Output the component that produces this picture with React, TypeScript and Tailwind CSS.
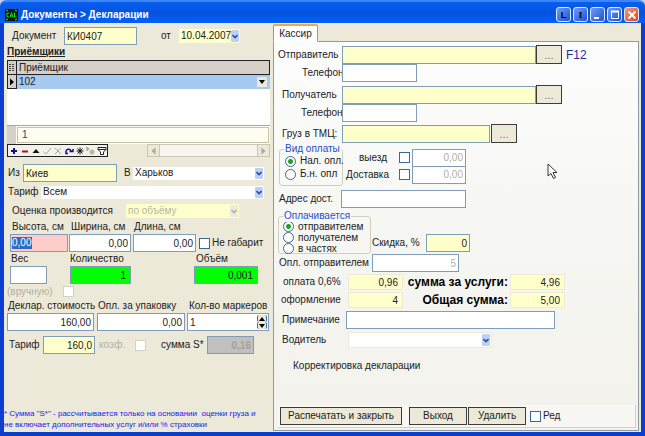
import React, { useState } from "react";

const box = "h-[18px] min-w-0 border border-[#7f9db9] px-1 text-[10px] leading-4 text-[#222] outline-none";

type BoxProps = {
  label: string;
  value?: string;
  className: string;
  disabled?: boolean;
};

function Box({ label, value = "", className, disabled }: BoxProps) {
  return <input type="text" aria-label={label} defaultValue={value} disabled={disabled} className={`${box} ${className}`} />;
}

type FieldProps = BoxProps & { id: string; labelClass?: string; inputClass: string };

function Field({ id, label, value = "", className, labelClass = "pl-[2px]", inputClass }: FieldProps) {
  return (
    <div className={`flex shrink-0 flex-col ${className}`}>
      <label htmlFor={id} className={`h-[14px] leading-[14px] whitespace-nowrap ${labelClass}`}>
        {label}
      </label>
      <input id={id} type="text" defaultValue={value} className={`${box} w-full ${inputClass}`} />
    </div>
  );
}

type PickProps = { id: string; label?: string; value: string; className: string; disabled?: boolean };

function Pick({ id, label, value, className, disabled }: PickProps) {
  return (
    <div className={`relative shrink-0 ${className}`}>
      <select
        id={id}
        aria-label={label}
        disabled={disabled}
        className="block h-full w-full appearance-none bg-transparent pr-[9px] pl-[2px] text-[10px] leading-none outline-none"
      >
        <option>{value}</option>
      </select>
      <span
        className={`pointer-events-none absolute top-px right-px bottom-px flex w-[8px] items-center justify-center rounded-[1px] ${
          disabled ? "bg-[#ebe9dc] text-[#b5b3a5]" : "bg-[#bdd0fb] text-[#33508f]"
        }`}
      >
        <svg width="6" height="5" viewBox="0 0 6 5" fill="none" stroke="currentColor" strokeWidth="1.6">
          <path d="M0.5 1 L3 3.5 L5.5 1" />
        </svg>
      </span>
    </div>
  );
}

function Tick({ id, label, muted }: { id: string; label?: string; muted?: boolean }) {
  return (
    <input
      id={id}
      aria-label={label}
      type="checkbox"
      disabled={muted}
      className={`size-[11px] shrink-0 appearance-none border bg-white checked:bg-[#21a121] ${
        muted ? "border-[#d5d2c2]" : "border-[#3a6a94]"
      }`}
    />
  );
}

function Radio({ name, label, defaultChecked }: { name: string; label: string; defaultChecked?: boolean }) {
  return (
    <label className="flex items-center gap-1 whitespace-nowrap">
      <input
        type="radio"
        name={name}
        defaultChecked={defaultChecked}
        className="size-[11px] shrink-0 appearance-none rounded-full border border-[#3a6a94] bg-white checked:bg-[radial-gradient(circle,#21a121_0_2px,#ffffff_3px)]"
      />
      {label}
    </label>
  );
}

function More({ label }: { label: string }) {
  return (
    <button
      type="button"
      aria-label={label}
      className="h-[19px] w-[26px] shrink-0 border border-[#3c3c38] bg-[#ece9d8] text-[11px] leading-4 text-[#77756a]"
    >
      ...
    </button>
  );
}

function TitleButton({ label, red, children }: { label: string; red?: boolean; children: React.ReactNode }) {
  return (
    <button
      type="button"
      aria-label={label}
      className={`flex size-[15px] items-center justify-center rounded-[3px] border border-[#dfe8fc] text-[9px] font-bold text-black ${
        red ? "bg-linear-to-br from-[#f09a7c] to-[#d8401c]" : "bg-linear-to-br from-[#6f9cf5] to-[#1c50d8]"
      }`}
    >
      {children}
    </button>
  );
}

function TitleBar() {
  return (
    <header className="flex h-[23px] items-center rounded-t-md border-t-2 border-[#3c86f8] bg-linear-to-b from-[#0a5fee] via-[#0453e0] to-[#0560f5] pr-[6px] pl-[5px]">
      <svg width="13" height="12" viewBox="0 0 13 12" className="mt-1">
        <rect width="13" height="12" fill="#061a06" />
        <path d="M1 2 L3 1 M10 1 L12 2 M1 10 L3 11 M10 11 L12 10" stroke="#b8b820" strokeWidth="1" />
        <path d="M4 4 H2 V8 H4 M5 8.500 L6.500 3.500 L8 8.500 M5.500 7 H7.500 M9.500 3.500 V8 H11.500" stroke="#19e019" strokeWidth="1" fill="none" />
      </svg>
      <h1 className="mt-1 ml-[3px] flex-1 text-[10px] leading-4 font-bold whitespace-nowrap text-white">Документы &gt; Декларации</h1>
      <div className="mt-1 flex gap-[2px]">
        <TitleButton label="L">L</TitleButton>
        <TitleButton label="I">
          <span className="font-['Liberation_Serif',serif]">I</span>
        </TitleButton>
        <TitleButton label="Свернуть">
          <svg width="10" height="10" viewBox="0 0 10 10">
            <rect x="1" y="7" width="5" height="2" fill="#fff" />
          </svg>
        </TitleButton>
        <TitleButton label="Развернуть">
          <svg width="10" height="10" viewBox="0 0 10 10" fill="none" stroke="#fff">
            <path d="M1 1.500 H9" strokeWidth="2" />
            <path d="M1.500 1 V8.500 H8.500 V1" />
          </svg>
        </TitleButton>
        <TitleButton label="Закрыть" red>
          <svg width="10" height="10" viewBox="0 0 10 10" stroke="#fff" strokeWidth="1.800">
            <path d="M1.500 1.500 L8.500 8.500 M8.500 1.500 L1.500 8.500" />
          </svg>
        </TitleButton>
      </div>
    </header>
  );
}

const tools: { label: string; icon: React.ReactNode }[] = [
  { label: "Добавить", icon: <path d="M5 2 V8 M2 5 H8" stroke="#10108c" strokeWidth="2" /> },
  { label: "Удалить строку", icon: <path d="M2 5.500 H8" stroke="#9c1c1c" strokeWidth="2" /> },
  { label: "Изменить", icon: <path d="M1.500 7 L5 3 L8.500 7 Z" fill="#111" /> },
  { label: "Сохранить", icon: <path d="M1.500 5.500 L4 8 L9 2" stroke="#a9a797" fill="none" /> },
  { label: "Отменить", icon: <path d="M2 2 L8 8 M8 2 L2 8" stroke="#a9a797" /> },
  { label: "Обновить", icon: <path d="M4 7.500 H2 C1 2 7 2 7.500 6 M5.500 5.500 H9 V3" stroke="#10108c" strokeWidth="1.500" fill="none" /> },
  { label: "Закладка", icon: <path d="M5 1.500 V8.500 M1.500 5 H8.500 M2.500 2.500 L7.500 7.500 M7.500 2.500 L2.500 7.500" stroke="#111" /> },
  {
    label: "К закладке",
    icon: <path d="M1 1 V5 L3 3 Z M6 3 V9 M3 6 H9 M4 4 L8 8 M8 4 L4 8" stroke="#a9a797" fill="#a9a797" />,
  },
  { label: "Фильтр", icon: <path d="M1 1.500 H9 V3.500 L6.500 6 V8.500 H3.500 V6 L1 3.500 Z M1 3.500 H9" stroke="#222" fill="#fff" /> },
];

function ReceiverGrid() {
  return (
    <section aria-label="Приёмщики">
      <table className="w-full table-fixed border-collapse bg-white text-left text-[10px]">
        <thead>
          <tr className="h-[14px] bg-[#d6d0c8]">
            <th className="w-[9px] border border-[#222] p-0">
              <svg width="7" height="9" viewBox="0 0 7 9" stroke="#444">
                <path d="M1 1.500 H3 M4 1.500 H6 M1 3.500 H3 M4 3.500 H6 M1 5.500 H3 M4 5.500 H6 M1 7.500 H3 M4 7.500 H6" />
              </svg>
            </th>
            <th className="border border-[#222] p-0 pl-[2px] leading-3 font-normal">Приёмщик</th>
          </tr>
        </thead>
        <tbody>
          <tr className="h-[14px]">
            <td className="border border-[#222] bg-[#d6d0c8] p-0">
              <svg width="7" height="8" viewBox="0 0 7 8">
                <path d="M2 0.500 L6 4 L2 7.500 Z" fill="#000" />
              </svg>
            </td>
            <td className="bg-[#a6caf0] p-0 pl-[2px] leading-3">
              <div className="flex items-center justify-between pr-[3px]">
                102
                <button type="button" aria-label="Выбрать приёмщика" className="flex h-[10px] w-[10px] items-center justify-center bg-[#ece9d8]">
                  <svg width="6" height="4" viewBox="0 0 6 4">
                    <path d="M0 0 H6 L3 4 Z" />
                  </svg>
                </button>
              </div>
            </td>
          </tr>
        </tbody>
      </table>
      <div className="h-[36px] bg-white" />
      <div className="flex h-[19px] border-t border-[#aca899] bg-[#fffcf0]">
        <div className="w-[9px] bg-[#d6d0c8]" />
        <output className="m-px flex-1 border border-[#c5c2b0] pl-1 text-[10px] leading-[14px] text-[#1d4a7c]">1</output>
      </div>
      <div className="flex h-[13px]">
        <div className="flex border border-[#222] bg-[#f4f2e8]">
          {tools.map((t) => (
            <button key={t.label} type="button" aria-label={t.label} className="flex w-[11px] items-center justify-center">
              <svg width="10" height="10" viewBox="0 0 10 10">
                {t.icon}
              </svg>
            </button>
          ))}
        </div>
        <div className="ml-[39px] flex flex-1 justify-between border border-[#c9c6b4] bg-[#f8f6ee]">
          <button type="button" aria-label="Влево" className="flex w-[12px] items-center justify-center border-r border-[#c9c6b4] bg-[#ece9d8]">
            <svg width="5" height="8" viewBox="0 0 5 8">
              <path d="M4.500 0.500 V7.500 L0.500 4 Z" fill="#aca899" />
            </svg>
          </button>
          <button type="button" aria-label="Вправо" className="flex w-[12px] items-center justify-center border-l border-[#c9c6b4] bg-[#ece9d8]">
            <svg width="5" height="8" viewBox="0 0 5 8">
              <path d="M0.500 0.500 V7.500 L4.500 4 Z" fill="#aca899" />
            </svg>
          </button>
        </div>
      </div>
    </section>
  );
}

function ParcelPane() {
  return (
    <section className="flex w-[269px] shrink-0 flex-col px-[3px] pt-1">
      <div className="flex h-[18px] items-center">
        <label htmlFor="doc" className="w-[57px] pl-[5px]">
          Документ
        </label>
        <input id="doc" type="text" defaultValue="КИ0407" className={`${box} w-[73px] bg-[#ffffcc] px-[2px]`} />
        <label htmlFor="date" className="w-[42px] pl-6">
          от
        </label>
        <Pick id="date" value="10.04.2007" className="h-[14px] w-[61px] bg-[#ffffcc]" />
      </div>
      <h2 className="h-[15px] text-[10px] leading-[13px] font-bold underline">Приёмщики</h2>
      <ReceiverGrid />

      <div className="mt-[7px] flex h-[18px] items-center">
        <label htmlFor="from" className="w-[16px] pl-px">
          Из
        </label>
        <input id="from" type="text" defaultValue="Киев" className={`${box} w-[94px] bg-[#ffffcc] px-[2px]`} />
        <label htmlFor="to" className="w-[16px] pl-[7px]">
          В
        </label>
        <Pick id="to" value="Харьков" className="h-[13px] w-[131px] bg-white" />
      </div>
      <div className="mt-[2px] flex h-[16px] items-center">
        <label htmlFor="tariff" className="w-[34px] pl-px">
          Тариф
        </label>
        <Pick id="tariff" value="Всем" className="h-[13px] w-[223px] bg-white" />
      </div>
      <div className="mt-1 flex h-[14px] items-center">
        <label htmlFor="rate" className="w-[119px] pl-[5px] whitespace-nowrap">
          Оценка производится
        </label>
        <Pick id="rate" value="по объёму" disabled className="h-[14px] w-[113px] bg-[#ffffcc] text-[#bab8a0]" />
      </div>

      <div className="mt-[2px] flex items-end pl-[3px]">
        <div className="flex w-[58px] shrink-0 flex-col">
          <label htmlFor="height" className="h-[14px] pl-[2px] leading-[14px] whitespace-nowrap">
            Высота, см
          </label>
          <div className="flex h-[18px] items-center border border-[#7f9db9] bg-[#ffcccc] px-px">
            <input id="height" type="text" defaultValue="0,00" className="h-[12px] w-[20px] bg-[#316ac5] text-[10px] leading-3 text-white outline-none" />
          </div>
        </div>
        <Field id="width" label="Ширина, см" value="0,00" className="ml-px w-[62px]" inputClass="bg-white px-[2px] text-right" />
        <Field id="length" label="Длина, см" value="0,00" className="ml-[2px] w-[63px]" labelClass="pl-px" inputClass="bg-white px-[2px] text-right" />
        <div className="ml-[3px] flex h-[18px] items-center gap-[2px]">
          <Tick id="oversize" />
          <label htmlFor="oversize" className="whitespace-nowrap">
            Не габарит
          </label>
        </div>
      </div>

      <div className="flex items-end pl-[3px]">
        <Field id="weight" label="Вес" className="w-[37px]" labelClass="pl-px" inputClass="bg-white" />
        <Field id="count" label="Количество" value="1" className="ml-[23px] w-[61px]" labelClass="" inputClass="bg-[#00ff00] text-right" />
        <Field id="volume" label="Объём" value="0,001" className="ml-[63px] w-[64px]" inputClass="bg-[#00ff00] text-right" />
      </div>
      <div className="flex h-[15px] items-center text-[#b3b09e]">
        <label htmlFor="manual" className="w-[56px]">
          (вручную)
        </label>
        <Tick id="manual" muted />
      </div>

      <div className="flex items-end">
        <Field id="declared" label="Деклар. стоимость" value="160,00" className="w-[87px]" labelClass="pl-px" inputClass="bg-white px-[2px] text-right" />
        <Field id="packing" label="Опл. за упаковку" value="0,00" className="ml-[3px] w-[88px]" labelClass="pl-px" inputClass="bg-white px-[2px] text-right" />
        <div className="relative ml-[2px] flex w-[82px] flex-col">
          <label htmlFor="markers" className="h-[14px] pl-[2px] leading-[14px] whitespace-nowrap">
            Кол-во маркеров
          </label>
          <input id="markers" type="text" defaultValue="1" className={`${box} w-full bg-white px-[2px]`} />
          <div className="absolute right-[2px] bottom-[2px] flex h-[14px] w-[10px] flex-col">
            <button type="button" aria-label="Больше" className="flex flex-1 items-center justify-center rounded-[2px] border-x border-[#3c6a9c] bg-[#ece9d8]">
              <svg width="6" height="4" viewBox="0 0 6 4">
                <path d="M0 4 H6 L3 0 Z" />
              </svg>
            </button>
            <button type="button" aria-label="Меньше" className="flex flex-1 items-center justify-center rounded-[2px] border-x border-[#3c6a9c] bg-[#ece9d8]">
              <svg width="6" height="4" viewBox="0 0 6 4">
                <path d="M0 0 H6 L3 4 Z" />
              </svg>
            </button>
          </div>
        </div>
      </div>

      <div className="mt-[5px] flex h-[18px] items-center">
        <label htmlFor="tariffSum" className="w-[36px] pl-[2px]">
          Тариф
        </label>
        <input id="tariffSum" type="text" defaultValue="160,0" className={`${box} w-[52px] bg-[#ffffcc] px-[2px] text-right`} />
        <label htmlFor="coef" className="w-[40px] pl-1 text-[#b3b09e]">
          коэф.
        </label>
        <Tick id="coef" muted />
        <label htmlFor="sum" className="w-[61px] pl-[15px] whitespace-nowrap">
          сумма S*
        </label>
        <input
          id="sum"
          type="text"
          disabled
          defaultValue="0,16"
          className={`${box} w-[47px] bg-[#c0c0c0] px-[2px] text-right font-bold text-[#a5a297]`}
        />
      </div>

      <p className="mt-auto -mr-[2px] -ml-[3px] pb-[2px] text-[8px] leading-[11px] whitespace-nowrap text-[#1a1af0]">
        * Сумма "S*" - рассчитывается только на основании&nbsp; оценки груза и
        <br />
        не включает дополнительных услуг и/или % страховки
      </p>
    </section>
  );
}

const groupBox = "relative shrink-0 rounded-[3px] border border-[#d0d0bf]";
const groupTitle = "absolute -top-[7px] left-1 bg-[#f8f8f6] px-px leading-3 whitespace-nowrap text-[#1c50d0]";
const total = "h-[16px] w-[55px] shrink-0 border border-[#ece9d8] bg-[#ffffcc] px-1 text-right text-[10px] leading-3 text-[#222] outline-none";

function CashierPane() {
  const [tab] = useState("Кассир");
  return (
    <section className="flex min-w-0 flex-1 flex-col pb-px">
      <div role="tablist" className="mr-[2px] flex h-[19px] items-end border-b border-[#919b9c]">
        <button
          type="button"
          role="tab"
          aria-selected="true"
          className="-mb-px h-[18px] w-[45px] rounded-t-[2px] border border-t-2 border-[#919b9c] border-t-[#ffa62c] border-b-white bg-white leading-[14px]"
        >
          {tab}
        </button>
      </div>
      <div role="tabpanel" className="mr-[2px] flex flex-1 flex-col border-x border-b border-[#919b9c] bg-linear-to-b from-[#fdfdfd] via-[#f6f6f2] to-[#f3f2ec] pt-[3px] pl-1">
        <div className="flex h-[19px] items-center">
          <label htmlFor="sender" className="w-[64px]">
            Отправитель
          </label>
          <input id="sender" type="text" className={`${box} w-[194px] bg-[#ffffcc]`} />
          <More label="Выбрать отправителя" />
          <span className="ml-1 text-[12px] leading-4 text-[#2b2ba0]">F12</span>
        </div>
        <div className="flex h-[18px] items-center">
          <label htmlFor="senderPhone" className="w-[64px] pl-6">
            Телефон
          </label>
          <input id="senderPhone" type="text" className={`${box} w-[75px] bg-white`} />
        </div>
        <div className="mt-[3px] flex h-[19px] items-center">
          <label htmlFor="receiver" className="w-[64px] pl-1">
            Получатель
          </label>
          <input id="receiver" type="text" className={`${box} w-[194px] bg-[#ffffcc]`} />
          <More label="Выбрать получателя" />
        </div>
        <div className="flex h-[18px] items-center">
          <label htmlFor="receiverPhone" className="w-[64px] pl-[23px]">
            Телефон
          </label>
          <input id="receiverPhone" type="text" className={`${box} w-[75px] bg-white`} />
        </div>
        <div className="mt-[2px] flex h-[19px] items-center">
          <label htmlFor="cargo" className="w-[64px] pl-1 whitespace-nowrap">
            Груз в ТМЦ:
          </label>
          <input id="cargo" type="text" className={`${box} mr-px w-[148px] bg-[#ffffcc]`} />
          <More label="Выбрать груз" />
        </div>

        <div className="mt-[6px] flex">
          <div role="radiogroup" aria-label="Вид оплаты" className={`${groupBox} ml-px flex h-[37px] w-[64px] flex-col gap-px pt-[5px] pl-[5px]`}>
            <span className={groupTitle}>Вид оплаты</span>
            <Radio name="payment" label="Нал. опл." defaultChecked />
            <Radio name="payment" label="Б.н. опл" />
          </div>
          <div className="flex flex-col">
            <div className="flex h-[17px] items-center">
              <label htmlFor="visit" className="w-[56px] pl-4">
                выезд
              </label>
              <Tick id="visit" />
              <Box label="выезд, сумма" value="0,00" disabled className="ml-[2px] w-[54px] bg-white px-[2px] text-right text-[#b3b09e]" />
            </div>
            <div className="flex h-[17px] items-center">
              <label htmlFor="delivery" className="w-[56px] pl-[3px]">
                Доставка
              </label>
              <Tick id="delivery" />
              <Box label="Доставка, сумма" value="0,00" disabled className="ml-[2px] w-[54px] bg-white px-[2px] text-right text-[#b3b09e]" />
            </div>
          </div>
        </div>
        <div className="mt-1 flex h-[18px] items-center">
          <label htmlFor="address" className="w-[63px] pl-px whitespace-nowrap">
            Адрес дост.
          </label>
          <input id="address" type="text" className={`${box} w-[125px] bg-white`} />
        </div>

        <div className="mt-2 flex items-end">
          <div role="radiogroup" aria-label="Оплачивается" className={`${groupBox} flex h-[38px] w-[93px] flex-col pt-1 pl-1 leading-[10px]`}>
            <span className={groupTitle}>Оплачивается</span>
            <Radio name="payer" label="отправителем" defaultChecked />
            <Radio name="payer" label="получателем" />
            <Radio name="payer" label="в частях" />
          </div>
          <div className="mb-[2px] flex h-[18px] items-center">
            <label htmlFor="discount" className="w-[55px] pl-px whitespace-nowrap">
              Скидка, %
            </label>
            <input id="discount" type="text" defaultValue="0" className={`${box} w-[44px] bg-[#ffffcc] px-[2px] text-right`} />
          </div>
        </div>
        <div className="flex h-[18px] items-center">
          <label htmlFor="senderPays" className="w-[94px] pl-px whitespace-nowrap">
            Опл. отправителем
          </label>
          <input id="senderPays" type="text" disabled defaultValue="5" className={`${box} w-[87px] bg-white px-[2px] text-right text-[#b3b09e]`} />
        </div>

        <div className="mt-px flex h-[18px] items-center">
          <label htmlFor="fee" className="w-[70px] pl-[5px] whitespace-nowrap">
            оплата 0,6%
          </label>
          <input id="fee" type="text" defaultValue="0,96" className={total} />
          <label htmlFor="services" className="w-[107px] pr-[2px] text-right text-[12px] font-bold whitespace-nowrap text-black">
            сумма за услуги:
          </label>
          <input id="services" type="text" defaultValue="4,96" className={total} />
        </div>
        <div className="flex h-[18px] items-center">
          <label htmlFor="paperwork" className="w-[70px] pl-[3px] whitespace-nowrap">
            оформление
          </label>
          <input id="paperwork" type="text" defaultValue="4" className={total} />
          <label htmlFor="grand" className="w-[107px] pr-[2px] text-right text-[12px] font-bold whitespace-nowrap text-black">
            Общая сумма:
          </label>
          <input id="grand" type="text" defaultValue="5,00" className={total} />
        </div>
        <div className="mt-[2px] flex h-[18px] items-center">
          <label htmlFor="note" className="w-[68px] pl-1">
            Примечание
          </label>
          <input id="note" type="text" className={`${box} w-[209px] bg-white`} />
        </div>
        <div className="mt-[3px] flex h-[16px] items-center">
          <label htmlFor="driver" className="w-[70px] pl-1">
            Водитель
          </label>
          <Pick id="driver" value="" className="h-[16px] w-[144px] border border-[#ece9d8] bg-white" />
        </div>
        <p className="mt-[10px] pl-[15px] leading-4">Корректировка декларации</p>

        <footer className="mt-auto mr-[2px] mb-[2px] flex h-[23px] items-center border-r border-b border-[#d5d2c2] bg-[#f8f7f3] pl-[2px]">
          <button type="button" className="h-[18px] w-[122px] border border-[#3c3c38] bg-[#ece9d8] leading-4">
            Распечатать и закрыть
          </button>
          <button type="button" className="ml-[7px] h-[18px] w-[58px] border border-[#3c3c38] bg-[#ece9d8] leading-4">
            Выход
          </button>
          <button type="button" className="ml-px h-[18px] w-[58px] border border-[#3c3c38] bg-[#ece9d8] leading-4">
            Удалить
          </button>
          <label className="ml-1 flex items-center gap-[2px]">
            <Tick id="edit" />
            Ред
          </label>
        </footer>
      </div>
    </section>
  );
}

export default function App() {
  return (
    <div className="flex min-h-screen flex-col bg-[#c3d1f5] font-['Liberation_Sans',Arial,sans-serif] text-[10px] leading-3 text-[#222]">
      <TitleBar />
      <main className="flex flex-1 border-x-4 border-b-4 border-[#0a3fd0] bg-[#ece9d8]">
        <ParcelPane />
        <CashierPane />
      </main>
      <svg width="11" height="17" viewBox="0 0 11 17" className="pointer-events-none absolute top-[163px] left-[547px]">
        <path d="M1 1 V13 L4 10.500 L6.500 15.500 L8.500 14.500 L6 9.500 H10 Z" fill="#fff" stroke="#333" />
      </svg>
    </div>
  );
}
